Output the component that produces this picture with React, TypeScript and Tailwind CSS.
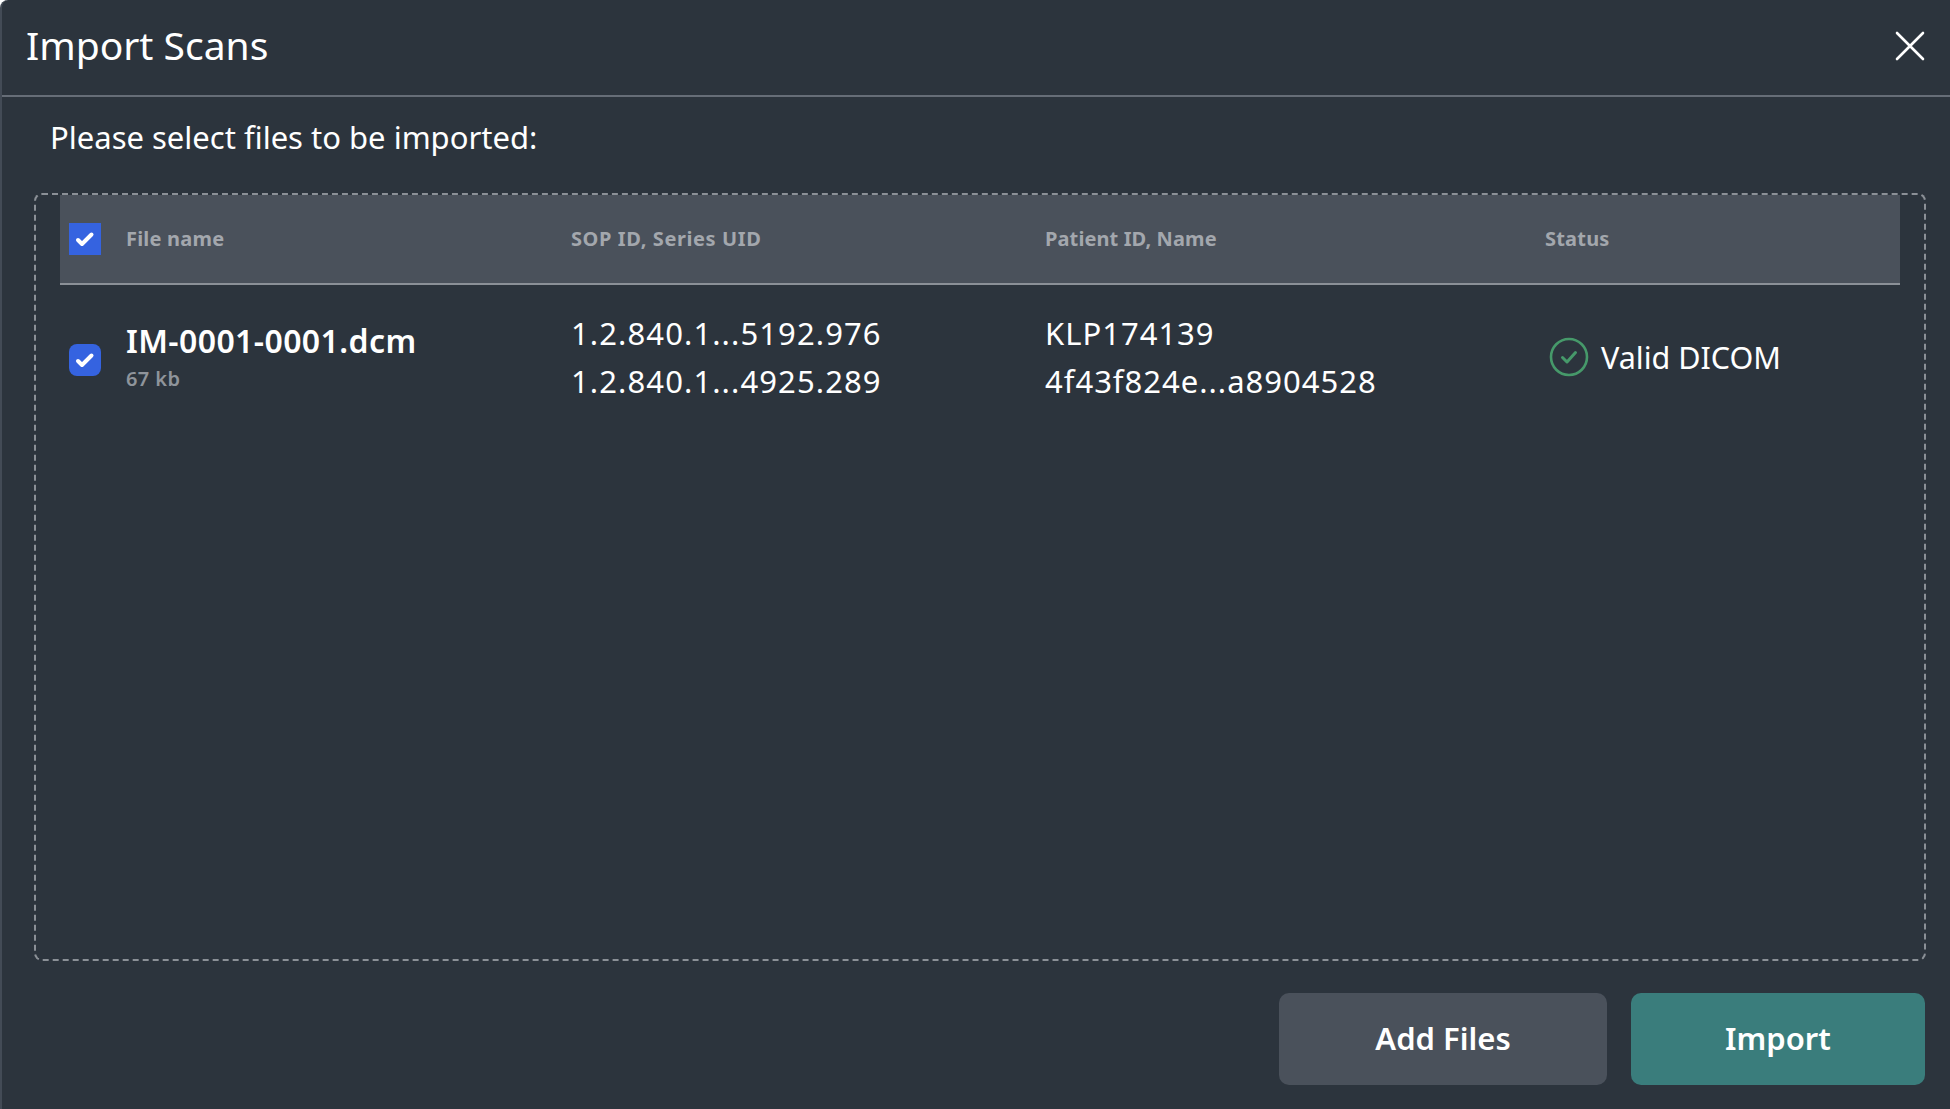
const columns = 'grid grid-cols-[57px_445px_474px_500px_1fr]';

function CheckBox({ rounded }: { rounded?: boolean }) {
  return (
    <div className={`w-8 h-8 bg-[#3563e0] flex items-center justify-center ${rounded ? 'rounded-lg' : ''}`}>
      <svg width="20" height="18" viewBox="0 0 20 18" fill="none">
        <path d="M3 10 L7 14 L16.5 4.5" stroke="#ffffff" strokeWidth="4" strokeLinecap="round" strokeLinejoin="round" />
      </svg>
    </div>
  );
}

export default function App() {
  return (
    <div className="w-full h-[1109px] overflow-hidden bg-[#2c343d] text-white border-l-2 border-[#434b56] rounded-tl-lg font-['Noto_Sans',sans-serif]">
      <div className="h-[97px] flex items-center justify-between pl-[24px] pr-[25px] border-b-2 border-[#666d77]">
        <h1 className="text-[39px] leading-none -mt-[6px] font-normal">Import Scans</h1>
        <svg width="30" height="30" viewBox="0 0 30 30" fill="none" className="-mt-1">
          <path d="M2 2 L28 28 M28 2 L2 28" stroke="#ffffff" strokeWidth="2.6" strokeLinecap="round" />
        </svg>
      </div>

      <p className="pl-[48px] pt-[18px] text-[31px] leading-[44px]">Please select files to be imported:</p>

      <div className="mt-[34px] ml-[32px] mr-[24px] h-[768px] border-2 border-dashed border-[#8b9097] rounded-lg px-[24px]">
        <div className={`${columns} h-[90px] items-center bg-[#4a515b] border-b-2 border-[#8b9097] pl-[9px] text-[20px] font-bold text-[#a3a7ad] tracking-[0.2px]`}>
          <CheckBox />
          <span>File name</span>
          <span className="tracking-[0.6px]">SOP ID, Series UID</span>
          <span className="tracking-[0.1px]">Patient ID, Name</span>
          <span>Status</span>
        </div>

        <div className={`${columns} items-center pl-[9px] pt-[24px] text-[31px] leading-[48px] tracking-[1px]`}>
          <div className="pt-[6px]">
            <CheckBox rounded />
          </div>
          <div className="tracking-normal pt-[2px]">
            <div className="text-[32px] leading-[42px] font-semibold tracking-[0.4px]">IM-0001-0001.dcm</div>
            <div className="text-[20px] leading-[34px] font-semibold text-[#8f949b] tracking-[0.4px]">67 kb</div>
          </div>
          <div className="tracking-[1.1px]">
            <div>1.2.840.1...5192.976</div>
            <div>1.2.840.1...4925.289</div>
          </div>
          <div>
            <div>KLP174139</div>
            <div>4f43f824e...a8904528</div>
          </div>
          <div className="flex items-center gap-3 pl-1 tracking-normal text-[30.5px]">
            <svg width="40" height="40" viewBox="0 0 40 40" fill="none">
              <circle cx="20" cy="20" r="18" stroke="#46996a" strokeWidth="2.6" />
              <path d="M13.5 20.5 L18 25 L26.5 15.5" stroke="#46996a" strokeWidth="3" strokeLinecap="round" strokeLinejoin="round" />
            </svg>
            <span>Valid DICOM</span>
          </div>
        </div>
      </div>

      <div className="flex justify-end gap-6 mt-[32px] mr-[25px] text-[31px] font-semibold">
        <button className="w-[328px] h-[92px] rounded-[10px] bg-[#4a515b] pb-[2px]">Add Files</button>
        <button className="w-[294px] h-[92px] rounded-[10px] bg-[#3a7d7c] pb-[2px]">Import</button>
      </div>
    </div>
  );
}
